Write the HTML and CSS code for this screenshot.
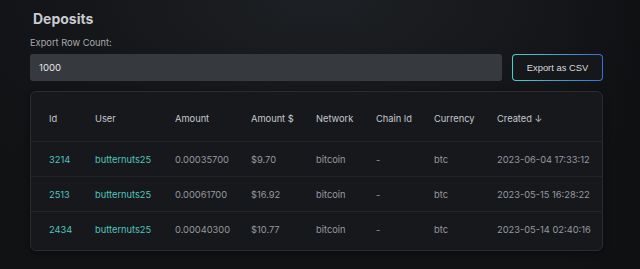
FILE: index.html
```html
<!DOCTYPE html>
<html>
<head>
    <title>Deposits</title>
    <link rel="stylesheet" href="styles.css">
</head>
<body>
<div class="page">
    <h2 class="title">Deposits</h2>
    <label class="label" for="row-count">Export Row Count:</label>
    <div class="export-bar">
        <input type="text" id="row-count" class="input" value="1000">
        <button class="export-btn"><span>Export as CSV</span></button>
    </div>

    <div class="card">
        <table class="table">
            <colgroup>
                <col style="width: 64px">
                <col style="width: 80px">
                <col style="width: 76px">
                <col style="width: 65px">
                <col style="width: 60px">
                <col style="width: 58px">
                <col style="width: 63px">
                <col>
            </colgroup>
            <thead>
                <tr>
                    <th>Id</th>
                    <th>User</th>
                    <th>Amount</th>
                    <th>Amount $</th>
                    <th>Network</th>
                    <th>Chain Id</th>
                    <th>Currency</th>
                    <th>Created &#8595;</th>
                </tr>
            </thead>
            <tbody>
                <tr>
                    <td class="link">3214</td>
                    <td class="link">butternuts25</td>
                    <td>0.00035700</td>
                    <td>$9.70</td>
                    <td>bitcoin</td>
                    <td>-</td>
                    <td>btc</td>
                    <td>2023-06-04 17:33:12</td>
                </tr>
                <tr>
                    <td class="link">2513</td>
                    <td class="link">butternuts25</td>
                    <td>0.00061700</td>
                    <td>$16.92</td>
                    <td>bitcoin</td>
                    <td>-</td>
                    <td>btc</td>
                    <td>2023-05-15 16:28:22</td>
                </tr>
                <tr>
                    <td class="link">2434</td>
                    <td class="link">butternuts25</td>
                    <td>0.00040300</td>
                    <td>$10.77</td>
                    <td>bitcoin</td>
                    <td>-</td>
                    <td>btc</td>
                    <td>2023-05-14 02:40:16</td>
                </tr>
            </tbody>
        </table>
    </div>
</div>
</body>
</html>
```

FILE: styles.css
```css
html, body {
    height: 100%;
}

body {
    margin: 0;
    font-family: Inter, "Liberation Sans", sans-serif;
    color: #c9cdd2;
    background:
        linear-gradient(to right, #0000 88%, #0c0d0f80 100%),
        radial-gradient(ellipse 70% 80% at 50% 0%, #1d2024 0%, #141518 60%, #111214 100%);
    background-color: #121316;
}

.page {
    padding: 8px 37px 0 30px;
}

.title {
    margin: 0 0 0 3px;
    font-size: 14px;
    font-weight: 700;
    line-height: 22px;
    color: #c7cbd0;
}

.label {
    display: block;
    margin-top: 6px;
    font-size: 9.3px;
    line-height: 14px;
    color: #a4a9ae;
}

.export-bar {
    display: flex;
    gap: 10px;
    margin-top: 4px;
}

.input {
    flex: 1;
    height: 27px;
    padding: 0 9px;
    border: none;
    border-radius: 3px;
    background-color: #363a3e;
    color: #e2e4e6;
    font-family: inherit;
    font-size: 9.6px;
    box-sizing: border-box;
    outline: none;
}

.export-btn {
    width: 91px;
    height: 27px;
    padding: 1px;
    border: none;
    border-radius: 4px;
    background: linear-gradient(to right, #45d3c5, #3a6fd6);
    cursor: pointer;
    box-sizing: border-box;
}

.export-btn span {
    display: flex;
    align-items: center;
    justify-content: center;
    height: 100%;
    border-radius: 3px;
    background-color: #15171a;
    color: #d9dcdf;
    font-family: inherit;
    font-size: 9.4px;
}

.card {
    margin-top: 10px;
    padding: 4px 0;
    background-color: #17181c;
    border: 1px solid #2a2c31;
    border-radius: 6px;
    box-shadow: 0 2px 6px #00000066;
}

.table {
    width: 100%;
    border-collapse: collapse;
    table-layout: fixed;
    font-size: 9.3px;
}

.table th {
    height: 45px;
    padding: 0;
    text-align: left;
    font-weight: 400;
    color: #c4c8cd;
    border-bottom: 1px solid #222428;
}

.table td {
    height: 34px;
    padding: 0;
    color: #95999f;
    border-bottom: 1px solid #222428;
    white-space: nowrap;
}

.table tbody tr:last-child td {
    border-bottom: none;
}

.table th:first-child,
.table td:first-child {
    padding-left: 18px;
}

.table td.link {
    color: #50c5bd;
}
```
